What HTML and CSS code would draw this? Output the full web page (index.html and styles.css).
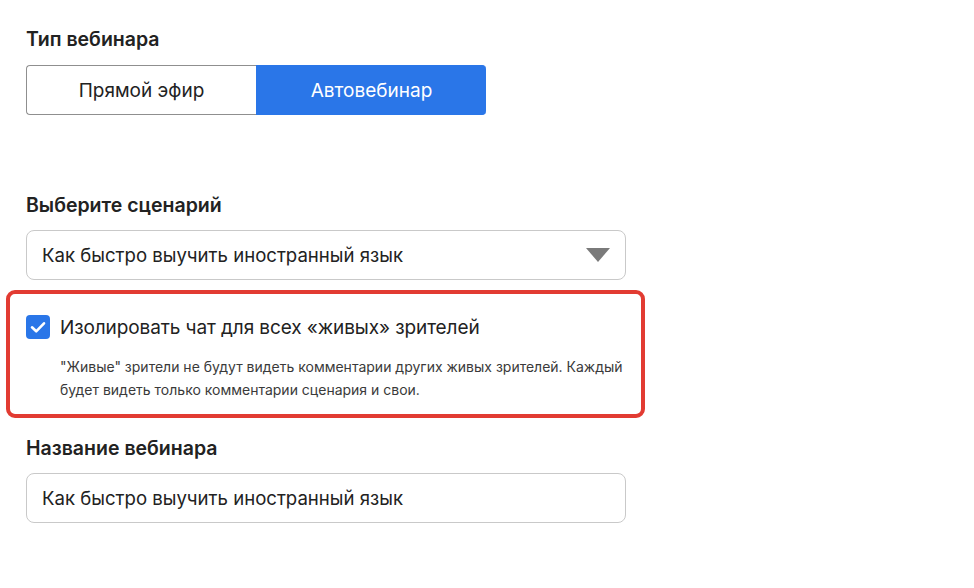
FILE: index.html
```html
<!DOCTYPE html>
<html lang="ru">
<head>
<meta charset="utf-8">
<title>Вебинар</title>
<link rel="stylesheet" href="styles.css">
</head>
<body>
<div class="form">
  <div class="label first">Тип вебинара</div>
  <div class="toggle">
    <div class="seg">Прямой эфир</div>
    <div class="seg active">Автовебинар</div>
  </div>

  <div class="label scen">Выберите сценарий</div>
  <div class="field select">
    <span>Как быстро выучить иностранный язык</span>
    <svg class="arrow" width="24" height="14" viewBox="0 0 24 14"><path d="M0 0H24L12 14Z" fill="#7a7a7a"/></svg>
  </div>

  <div class="highlight">
    <div class="check-row">
      <span class="checkbox">
        <svg width="24" height="24" viewBox="0 0 24 24"><path d="M6 12.3L10.2 16.3L18 8.3" fill="none" stroke="#fff" stroke-width="2.6" stroke-linecap="round" stroke-linejoin="round"/></svg>
      </span>
      <span class="check-label">Изолировать чат для всех «живых» зрителей</span>
    </div>
    <p class="hint">"Живые" зрители не будут видеть комментарии других живых зрителей. Каждый будет видеть только комментарии сценария и свои.</p>
  </div>

  <div class="label name">Название вебинара</div>
  <div class="field">
    <span>Как быстро выучить иностранный язык</span>
  </div>
</div>
</body>
</html>
```

FILE: styles.css
```css
html, body {
  margin: 0;
  padding: 0;
  background: #fff;
}
body {
  font-family: "Inter", "Noto Sans", sans-serif;
  color: #222;
}
.form {
  width: 600px;
  padding: 28px 0 0 26px;
  display: flex;
  flex-direction: column;
}
.label {
  font-size: 19.5px;
  line-height: 22px;
  font-weight: 600;
  color: #222;
}
.toggle {
  margin-top: 15px;
  display: flex;
  width: 460px;
  height: 50px;
}
.seg {
  flex: 1;
  display: flex;
  align-items: center;
  justify-content: center;
  font-size: 19px;
  color: #222;
  border: 1px solid #8f8f8f;
  border-right: none;
  border-radius: 4px 0 0 4px;
}
.seg.active {
  background: #2a76e8;
  border-color: #2a76e8;
  color: #fff;
  border-radius: 0 4px 4px 0;
}
.scen {
  margin-top: 79px;
}
.field {
  margin-top: 14px;
  height: 50px;
  box-sizing: border-box;
  border: 1px solid #c9c9c9;
  border-radius: 8px;
  display: flex;
  align-items: center;
  justify-content: space-between;
  padding: 0 15px 0 15px;
  font-size: 18.6px;
  color: #222;
}
.arrow {
  display: block;
}
.highlight {
  margin: 10px 0 0 -20px;
  width: 639px;
  box-sizing: border-box;
  border: 4px solid #e23b32;
  border-radius: 9px;
  padding: 21px 16px 13px 16px;
}
.check-row {
  display: flex;
  align-items: center;
  gap: 10px;
}
.checkbox {
  width: 24px;
  height: 24px;
  border-radius: 4px;
  background: #2a76e8;
  display: flex;
  align-items: center;
  justify-content: center;
  flex: none;
}
.checkbox svg {
  display: block;
}
.check-label {
  font-size: 19px;
  letter-spacing: -0.1px;
  color: #222;
}
.hint {
  margin: 16px 0 0 34px;
  font-size: 14px;
  line-height: 23px;
  color: #3a3a3a;
}
.name {
  margin-top: 19px;
}
```
